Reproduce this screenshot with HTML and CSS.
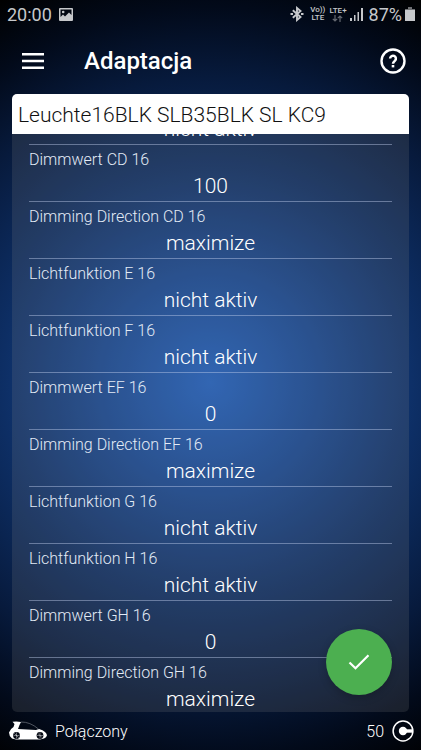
FILE: index.html
```html
<!DOCTYPE html>
<html lang="pl">
<head>
<meta charset="utf-8">
<meta name="viewport" content="width=device-width, initial-scale=1">
<title>Adaptacja</title>
<link rel="stylesheet" href="styles.css">
</head>
<body>
<div class="screen">
  <div class="status">
    <span class="clock">20:00</span>
    <svg class="status-image" width="14" height="13" viewBox="0 0 14 13"><path fill="currentColor" fill-rule="evenodd" d="M1 0h12q1 0 1 1v11q0 1-1 1H1q-1 0-1-1V1q0-1 1-1zM1.500 1.500v7.500L4 6.500l2 2 4-4 2.500 2.500V1.500zM4.200 2.700a1.300 1.300 0 1 1 0 2.600 1.300 1.300 0 0 1 0-2.600z"/></svg>
    <div class="status-right">
      <svg width="14" height="16" viewBox="0 0 14 16" fill="none" stroke="currentColor" stroke-width="1.900"><path d="M2.800 4.300L10.500 11 7 14V2L10.500 5 2.800 11.700"/><path d="M.5 8h2.500M11 8h2.500" stroke-width="2.200"/></svg>
      <span class="network"><span>Vo))</span><span>LTE</span></span>
      <span class="network network-data"><span>LTE+</span><svg width="11" height="7" viewBox="0 0 11 7" fill="none" stroke="currentColor" stroke-width="1.200"><path d="M3 0v6M.8 3.800L3 6l2.200-2.200M8 7V1M5.800 3.200L8 1l2.200 2.200"/></svg></span>
      <svg class="signal" width="13" height="13" viewBox="0 0 13 13" fill="currentColor"><path d="M0 10h2v3H0zM4 7h1.500v6H4zM7.500 4H9v9H7.500zM11 0h2v13h-2z"/></svg>
      <span class="percent">87%</span>
      <svg width="10" height="14" viewBox="0 0 10 14" fill="currentColor"><path opacity=".55" d="M3 0h4v2h3v2H0V2h3z"/><path d="M0 3h10v11H0z"/></svg>
    </div>
  </div>

  <header class="appbar">
    <button class="icon-button" type="button" aria-label="Menu">
      <svg width="24" height="18" viewBox="0 0 24 18" fill="#fff"><path d="M2 1h22v2.400H2zM2 7.800h22v2.400H2zM2 14.600h22V17H2z"/></svg>
    </button>
    <h1>Adaptacja</h1>
    <button class="icon-button" type="button" aria-label="Pomoc">
      <svg width="26" height="26" viewBox="0 0 26 26" fill="none" stroke="#fff"><circle cx="13" cy="13" r="11.500" stroke-width="2.400"/><path stroke-width="2.500" d="M10.100 10.600a2.900 2.900 0 1 1 4.900 2.100c-1.200 1.100-2 1.600-2 3.100"/><path stroke-width="2.600" d="M13 17v2.400"/></svg>
    </button>
  </header>

  <main class="panel">
    <h2>Leuchte16BLK SLB35BLK SL KC9</h2>
    <dl class="settings">
      <div class="row"><dd>nicht aktiv</dd></div>
      <div class="row"><dt>Dimmwert CD 16</dt><dd>100</dd></div>
      <div class="row"><dt>Dimming Direction CD 16</dt><dd>maximize</dd></div>
      <div class="row"><dt>Lichtfunktion E 16</dt><dd>nicht aktiv</dd></div>
      <div class="row"><dt>Lichtfunktion F 16</dt><dd>nicht aktiv</dd></div>
      <div class="row"><dt>Dimmwert EF 16</dt><dd>0</dd></div>
      <div class="row"><dt>Dimming Direction EF 16</dt><dd>maximize</dd></div>
      <div class="row"><dt>Lichtfunktion G 16</dt><dd>nicht aktiv</dd></div>
      <div class="row"><dt>Lichtfunktion H 16</dt><dd>nicht aktiv</dd></div>
      <div class="row"><dt>Dimmwert GH 16</dt><dd>0</dd></div>
      <div class="row"><dt>Dimming Direction GH 16</dt><dd>maximize</dd></div>
    </dl>
    <button class="confirm" type="button" aria-label="Zapisz">
      <svg width="22" height="16" viewBox="0 0 22 16" fill="none" stroke="#fff" stroke-width="2.200"><path d="M1.500 8.500L7.500 14.300 20.500 1.300"/></svg>
    </button>
  </main>

  <footer class="footer">
    <svg width="38" height="20" viewBox="0 0 38 20"><path fill="#fff" d="M3.500 .8Q8 .2 12 1L10.500 4 9 8l18 1 3-1q4 .8 6 3 1.600 1.600 2 3.200-.5 2.300-3 3.300l-4 1H7L3 17.500Q0 15 0 11.500 1 8 4.500 6L5.500 3z"/><path fill="none" stroke="#70757f" stroke-width=".7" d="M12 1Q21 .8 29.500 8"/><circle cx="7.500" cy="14.500" r="3.400" fill="#030711"/><circle cx="31" cy="14.500" r="3.400" fill="#030711"/><g stroke="#fff" stroke-width=".4"><path d="M7.500 11.500v6M4.500 14.500h6M5.400 12.400l4.200 4.200M31 11.500v6M28 14.500h6M28.900 12.400l4.200 4.200"/></g></svg>
    <span class="connection">Połączony</span>
    <span class="credits">50</span>
    <svg width="22" height="22" viewBox="0 0 22 22"><circle cx="11" cy="11" r="9.900" fill="none" stroke="#fff" stroke-width="1.500"/><circle cx="11" cy="11" r="4.200" fill="#fff"/><path fill="#fff" d="M11 9.300h10v3.400H11z"/></svg>
  </footer>
</div>
</body>
</html>
```
FILE: styles.css
```css
* {
  box-sizing: border-box;
}

body {
  margin: 0;
  background: #000;
  color: #fff;
  font-family: Roboto, "Noto Sans", sans-serif;
  font-weight: 300;
}

svg {
  display: block;
  flex: none;
}

h1, h2, dl, dd {
  margin: 0;
}

.screen {
  display: flex;
  flex-direction: column;
  height: 100vh;
  background: radial-gradient(circle farthest-corner at 50% 51%, #1f5fbe 0%, #164793 24%, #0d2e64 48%, #071a3c 70%, #020a1a 86%, #000 100%);
}

.status {
  display: flex;
  align-items: center;
  height: 28px;
  padding: 0 6px 0 7px;
  color: #c6c8cb;
  font-weight: 400;
}

.clock, .percent {
  font-size: 18px;
}

.status-image {
  margin-left: 7px;
}

.status-right {
  display: flex;
  align-items: center;
  margin-left: auto;
}

.network {
  display: flex;
  flex-direction: column;
  align-items: center;
  margin-left: 6px;
  font-size: 8px;
  font-weight: 500;
  line-height: 8px;
}

.network-data {
  margin-left: 4px;
}

.network-data svg {
  opacity: 0.5;
}

.signal {
  margin: 0 6px 0 3px;
}

.percent {
  margin-right: 3px;
}

.appbar {
  display: flex;
  align-items: center;
  height: 66px;
  padding: 0 12px;
}

.appbar h1 {
  flex: 1;
  padding-left: 32px;
  font-size: 24px;
  font-weight: 500;
}

.icon-button {
  display: grid;
  place-items: center;
  width: 32px;
  height: 32px;
  padding: 0;
  border: 0;
  background: none;
}

.appbar .icon-button:first-child {
  width: 40px;
}

.panel {
  position: relative;
  display: flex;
  flex: 1;
  flex-direction: column;
  min-height: 0;
  margin: 0 12px;
  overflow: hidden;
  border-radius: 5px;
  background: rgba(135, 135, 135, 0.19);
}

.panel h2 {
  flex: none;
  height: 40px;
  padding: 0 6px;
  background: #fff;
  color: #111;
  font-size: 21px;
  font-weight: 300;
  line-height: 42px;
}

.settings {
  display: flex;
  flex: 1;
  flex-direction: column;
  justify-content: flex-end;
  min-height: 0;
  padding: 0 17px;
  overflow: hidden;
}

.row {
  display: flex;
  flex: none;
  flex-direction: column;
  justify-content: flex-end;
  height: 57px;
  border-bottom: 1px solid rgba(190, 205, 235, 0.45);
}

.row:first-child {
  height: 32px;
}

.row:last-child {
  justify-content: flex-start;
  height: 54px;
  padding-top: 4px;
  border-bottom: 0;
}

.row dt {
  color: #e3ebf6;
  font-size: 16px;
  line-height: 22px;
}

.row dd {
  font-size: 21px;
  line-height: 30px;
  text-align: center;
}

.confirm {
  position: absolute;
  right: 17px;
  bottom: 17px;
  display: grid;
  place-items: center;
  width: 66px;
  height: 66px;
  padding: 0;
  border: 0;
  border-radius: 50%;
  background: #4caf50;
  box-shadow: 0 3px 8px rgba(0, 0, 0, 0.2);
}

.footer {
  display: flex;
  align-items: center;
  height: 38px;
  padding: 0 7px 0 9px;
  font-size: 16px;
}

.connection {
  margin-left: 8px;
}

.credits {
  margin: 0 8px 0 auto;
}
```
